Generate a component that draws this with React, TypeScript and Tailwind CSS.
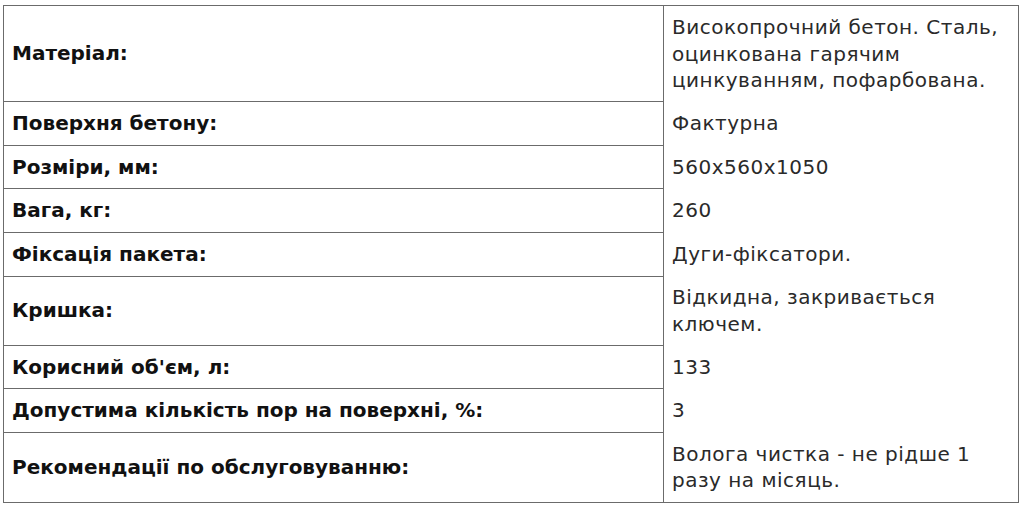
const rows: { label: string; value: string }[] = [
  { label: "Матеріал:", value: "Високопрочний бетон. Сталь, оцинкована гарячим цинкуванням, пофарбована." },
  { label: "Поверхня бетону:", value: "Фактурна" },
  { label: "Розміри, мм:", value: "560x560x1050" },
  { label: "Вага, кг:", value: "260" },
  { label: "Фіксація пакета:", value: "Дуги-фіксатори." },
  { label: "Кришка:", value: "Відкидна, закривається ключем." },
  { label: "Корисний об'єм, л:", value: "133" },
  { label: "Допустима кількість пор на поверхні, %:", value: "3" },
  { label: "Рекомендації по обслуговуванню:", value: "Волога чистка - не рідше 1 разу на місяць." },
];

export default function App() {
  return (
    <div className="min-h-screen bg-white pt-[5px] pl-[3px] font-['DejaVu_Sans',sans-serif]">
      <table className="w-[1016px] border-collapse border border-[#6b6b6b]">
        <tbody>
          {rows.map((row) => (
            <SpecRow key={row.label} label={row.label} value={row.value} />
          ))}
        </tbody>
      </table>
    </div>
  );
}

function SpecRow({ label, value }: { label: string; value: string }) {
  return (
    <tr>
      <td className="w-[660px] border border-[#6b6b6b] px-[8px] py-2 align-middle text-[20px] font-bold leading-[26.6px] text-[#111]">
        {label}
      </td>
      <td className="border-x border-[#6b6b6b] px-[8px] py-2 align-middle text-[20px] leading-[26.6px] tracking-[0.5px] text-[#2a2a2a]">
        {value}
      </td>
    </tr>
  );
}
